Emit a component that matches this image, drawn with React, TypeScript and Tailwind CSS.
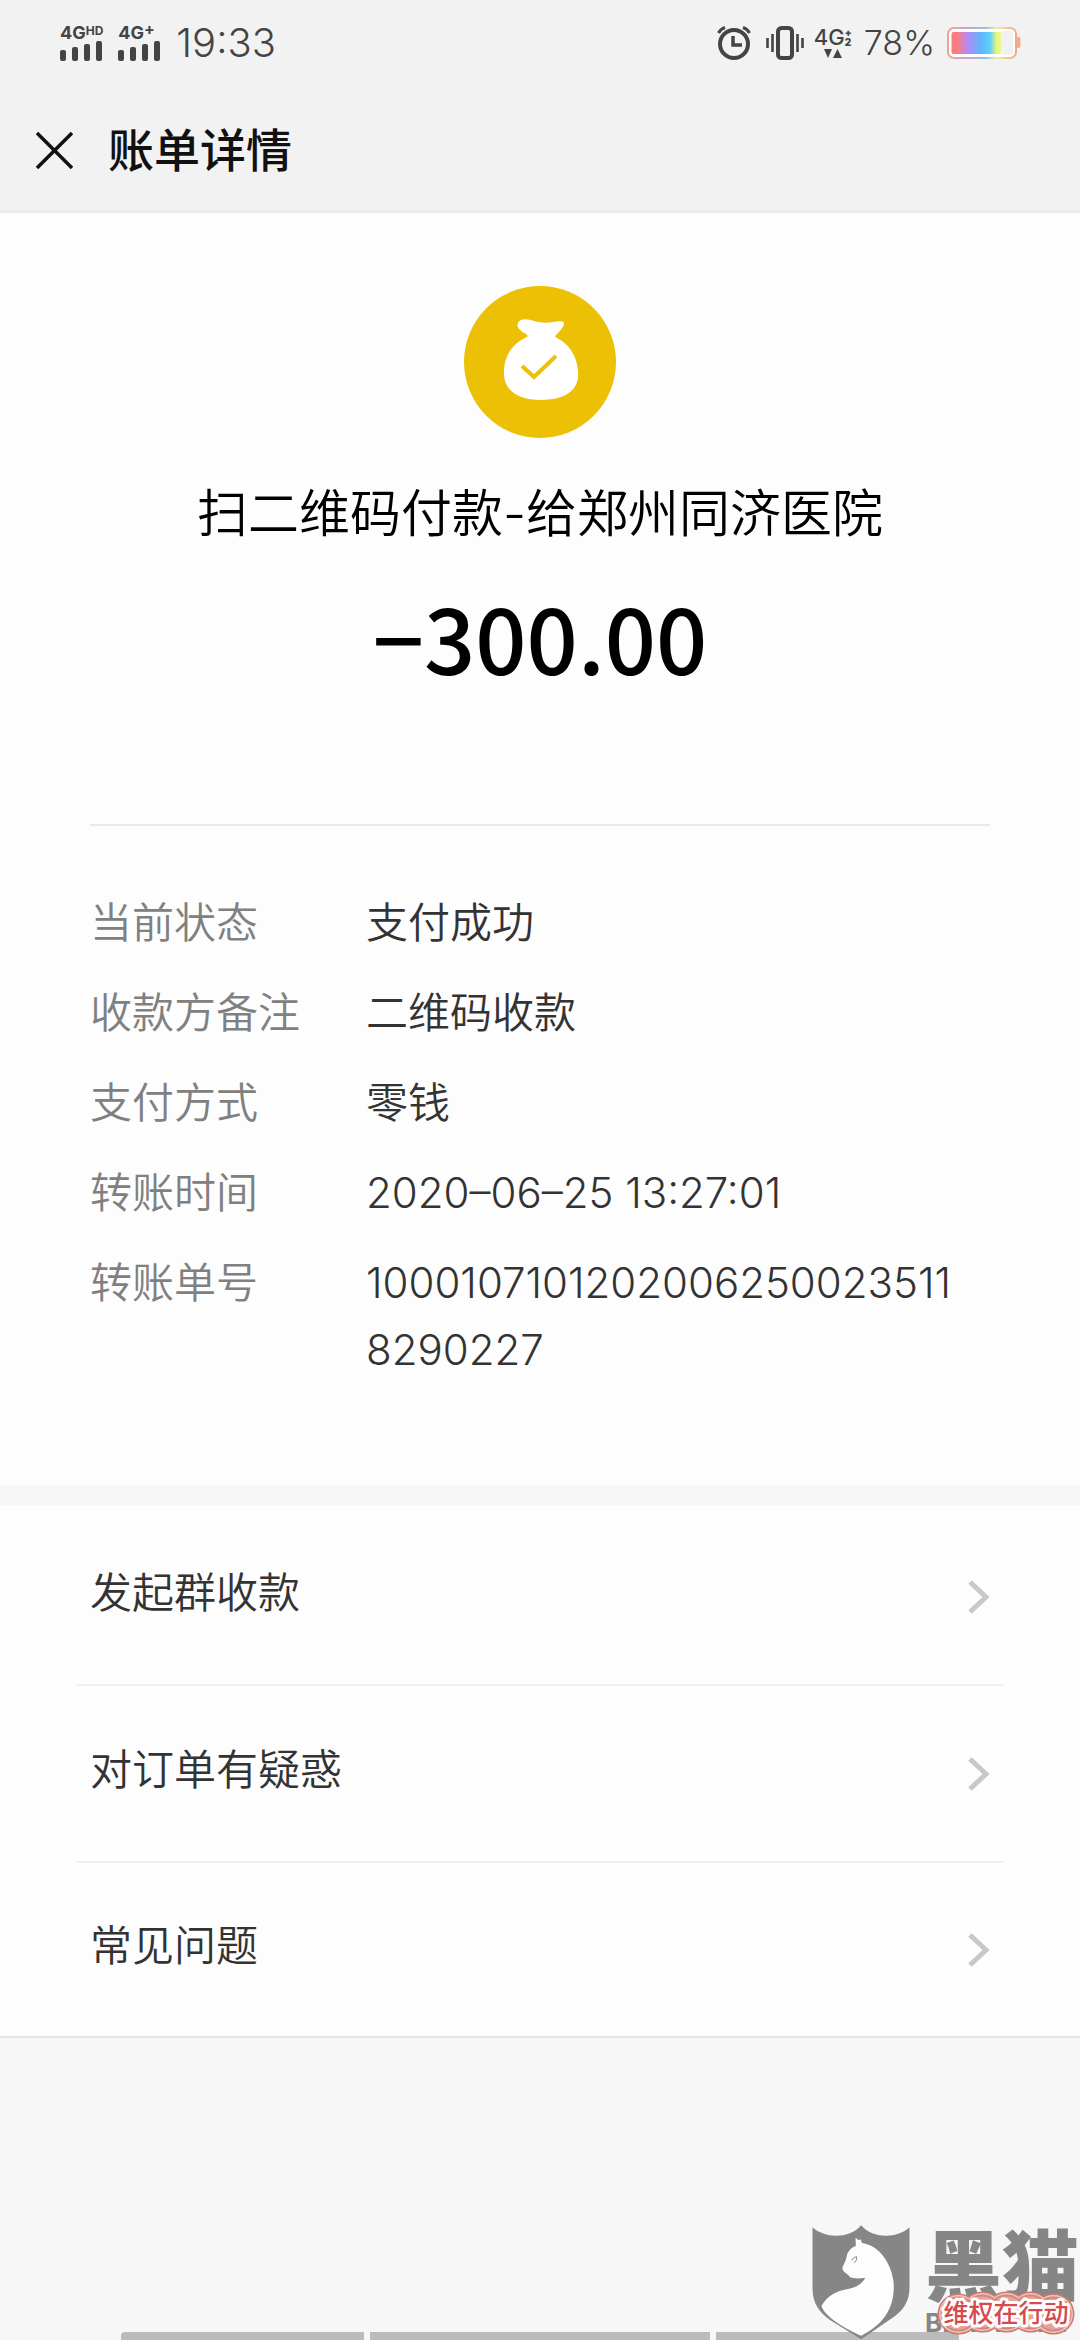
import type { ReactNode } from "react";

const details = [
  { label: "当前状态", value: "支付成功" },
  { label: "收款方备注", value: "二维码收款" },
  { label: "支付方式", value: "零钱" },
  { label: "转账时间", value: "2020–06–25 13:27:01" },
  { label: "转账单号", value: "10001071012020062500235118290227" },
];

const links = ["发起群收款", "对订单有疑惑", "常见问题"];

function Signal({ children }: { children: ReactNode }) {
  return (
    <div className="flex flex-col">
      <div className="flex h-4 items-start text-lg leading-4 font-bold">{children}</div>
      <svg viewBox="0 0 43 20" className="h-5 w-[43px]" fill="currentColor">
        <rect x="0" y="9" width="6" height="11" rx="2" />
        <rect x="12" y="6" width="6" height="14" rx="2" />
        <rect x="24" y="3" width="6" height="17" rx="2" />
        <rect x="36" y="0" width="6" height="20" rx="2" />
      </svg>
    </div>
  );
}

function AlarmIcon() {
  return (
    <svg viewBox="0 0 34 34" className="size-[34px]" fill="none" stroke="currentColor">
      <circle cx="17" cy="18" r="14" strokeWidth="4" />
      <path d="M16 10v9h9" strokeWidth="3.5" />
      <path d="M1.5 7C3 4 5 2.5 8 1.5M32.5 7C31 4 29 2.5 26 1.5" strokeWidth="3" />
    </svg>
  );
}

function VibrateIcon() {
  return (
    <svg viewBox="0 0 38 34" className="h-[34px] w-[38px]" fill="none" stroke="currentColor">
      <rect x="12" y="2" width="14" height="30" rx="3.5" strokeWidth="4" />
      <path d="M6.5 8v18M31.5 8v18" strokeWidth="2.6" />
      <path d="M1.5 12v10M36.5 12v10" strokeWidth="2.6" />
    </svg>
  );
}

function BatteryIcon() {
  return (
    <svg viewBox="0 0 74 32" className="h-8 w-[74px]">
      <defs>
        <linearGradient id="charge">
          <stop offset="0" stopColor="#ff7a7a" />
          <stop offset="0.12" stopColor="#fb7d80" />
          <stop offset="0.32" stopColor="#b58af8" />
          <stop offset="0.6" stopColor="#5cb8fb" />
          <stop offset="0.78" stopColor="#63d3f5" />
          <stop offset="0.9" stopColor="#e6f57c" />
          <stop offset="1" stopColor="#eef78c" />
        </linearGradient>
        <linearGradient id="shell">
          <stop offset="0" stopColor="#f0a392" />
          <stop offset="0.3" stopColor="#c9a3dc" />
          <stop offset="0.55" stopColor="#8ec4ee" />
          <stop offset="0.72" stopColor="#eef0a0" />
          <stop offset="1" stopColor="#f0ab84" />
        </linearGradient>
      </defs>
      <rect x="1" y="1" width="68" height="30" rx="6" fill="#fff" stroke="url(#shell)" strokeWidth="2" />
      <rect x="4.5" y="5" width="50" height="22" rx="2" fill="url(#charge)" />
      <rect x="54" y="4" width="12" height="24" rx="3" fill="#f1f1f1" />
      <path d="M70 10h1.5q2 0 2 2v7q0 2-2 2H70z" fill="#f0b087" />
    </svg>
  );
}

function StatusBar() {
  return (
    <div className="flex h-[86px] items-center justify-between pr-[59px] pl-[60px] text-[#444]">
      <div className="flex items-center gap-[15px]">
        <Signal>
          4G<span className="text-xs leading-3">HD</span>
        </Signal>
        <Signal>
          4G<span className="text-base leading-2">+</span>
        </Signal>
        <time className="text-[40px] leading-none font-light">19:33</time>
      </div>
      <div className="flex items-center">
        <AlarmIcon />
        <span className="ml-[15px]">
          <VibrateIcon />
        </span>
        <div className="mr-3 ml-2.5 flex w-[38px] flex-col">
          <div className="flex text-[22px] leading-5 font-medium">
            4G
            <span className="flex flex-col text-[10px] leading-[10px] font-black">
              <span>+</span>
              <span>2</span>
            </span>
          </div>
          <svg viewBox="0 0 38 12" className="h-3 w-[38px]" fill="currentColor">
            <path d="M10 2h8l-4 9zM19 11h9l-4.5-9z" />
          </svg>
        </div>
        <span className="mr-3 text-[34px] leading-none font-light">78%</span>
        <BatteryIcon />
      </div>
    </div>
  );
}

function MoneyBag() {
  return (
    <svg viewBox="0 0 152 152" className="mx-auto size-[152px]">
      <circle cx="76" cy="76" r="76" fill="#ebc005" />
      <path
        d="M54 37c2-5 10-4 16-2 7 2 13 2 19 1 6-1 11-1 11 1 0 4-4 8-8 12-1 1-1 2 1 3 12 6 20 18 21 33 2 20-14 29-37 29s-38-9-37-29c0-15 9-28 23-34 1-1 1-1-1-3-5-3-10-6-8-11z"
        fill="#fff"
      />
      <path d="M58 80l12 11 22-21" fill="none" stroke="#ebc005" strokeWidth="4" />
    </svg>
  );
}

/* shield logo, brand name and the red slogan sticker over it */
function Watermark() {
  return (
    <div className="absolute right-0 bottom-0 flex gap-[15px]">
      <svg viewBox="93 75 293 345" className="h-[115px] w-[98px]">
        <path
          d="M94 82C130 116 205 118 240 76C275 118 350 116 385 82V262C385 310 362 335 332 355L240 418L150 362C115 340 94 310 94 265Z"
          fill="#868686"
        />
        <path
          d="M223 113L233 121L239 118L242 129C290 135 330 185 337 245C342 300 325 365 240 407C195 388 130 350 121 318C140 285 165 274 200 267C225 262 243 252 252 233C235 236 218 236 207 232C202 223 188 219 184 208C182 200 194 186 196 172C198 156 208 144 224 138Z"
          fill="#fdfdfd"
        />
        <path d="M212 182c2-8 8-10 14-12c2 8-2 16-8 18" fill="none" stroke="#868686" strokeWidth="3" />
      </svg>
      <div className="w-[155px] text-[#868686]">
        <div className="pt-1.5 text-[77px] leading-[72px] font-black whitespace-nowrap">黑猫</div>
        <div className="pt-1 text-[26px] leading-8 font-bold whitespace-nowrap">BLACK CAT</div>
      </div>
      <svg viewBox="0 0 140 46" className="absolute right-1 bottom-1 h-[46px] w-[140px]">
        <g fill="none" strokeLinecap="round">
          <path d="M22 24h1M46 22h1M70 22h1M94 22h1M117 24h1" stroke="#cb7a72" strokeWidth="41" />
          <path d="M22 24h1M46 22h1M70 22h1M94 22h1M117 24h1" stroke="#efc3ba" strokeWidth="38" />
          <path d="M22 24h1M46 22h1M70 22h1M94 22h1M117 24h1" stroke="#d58880" strokeWidth="35" />
          <path d="M22 24h1M46 22h1M70 22h1M94 22h1M117 24h1" stroke="#e3a49b" strokeWidth="31" />
        </g>
        <text
          x="70"
          y="32"
          textAnchor="middle"
          fontSize="25"
          fontWeight="500"
          fill="#d8494c"
          stroke="#fff"
          strokeWidth="6"
          strokeLinejoin="round"
          paintOrder="stroke"
        >
          维权在行动
        </text>
      </svg>
    </div>
  );
}

export default function App() {
  return (
    <div className="relative flex min-h-screen flex-col bg-[#f7f7f7] font-[Inter,'Noto_Sans_CJK_SC',sans-serif] text-[#333]">
      <header className="border-b-[3px] border-[#ebebeb] bg-[#f2f2f2]">
        <StatusBar />
        <div className="flex h-[124px] items-center pt-1 pl-9 text-[#111]">
          <button type="button" aria-label="关闭" className="mr-[35px]">
            <svg viewBox="0 0 37 37" className="size-[37px]" fill="none" stroke="currentColor" strokeWidth="3.5">
              <path d="M1 1l35 35M36 1L1 36" />
            </svg>
          </button>
          <h1 className="text-[46px] leading-none font-medium">账单详情</h1>
        </div>
      </header>

      <main>
        <section className="bg-[#fdfdfd] px-[90px] pt-[73px] pb-[102px]">
          <MoneyBag />
          <p className="mt-10 text-center text-[51px] leading-[72px] font-[350] whitespace-nowrap text-black">
            扫二维码付款-给郑州同济医院
          </p>
          <p className="mt-[38px] text-center font-['Noto_Sans_CJK_SC',sans-serif] text-[90px] leading-24 font-medium text-black">
            −300.00
          </p>
          <hr className="mt-[140px] border-t-2 border-[#e9e9e9]" />

          <dl className="mt-[63px] flex flex-col gap-[23px] text-[42px] leading-[67px] font-[350]">
            {details.map((row) => (
              <div key={row.label} className="flex">
                <dt className="w-[276px] shrink-0 text-[#808080]">{row.label}</dt>
                <dd className="min-w-0 flex-1 pr-6 break-all">{row.value}</dd>
              </div>
            ))}
          </dl>
        </section>

        <nav className="mt-5 border-b-2 border-[#e5e5e5] bg-[#fdfdfd] px-[76px] pt-1 font-[350]">
          {links.map((text) => (
            <a
              key={text}
              href="#"
              className="flex h-[177px] items-center justify-between border-b-2 border-[#efefef] px-[14px] text-[42px] last:h-[173px] last:border-b-0"
            >
              <span className="pb-2">{text}</span>
              <svg viewBox="0 0 22 34" className="h-[34px] w-[22px]" fill="none" stroke="#c8c8c8" strokeWidth="5">
                <path d="M2 2l16 15L2 32" />
              </svg>
            </a>
          ))}
        </nav>
      </main>

      <div className="mt-auto flex h-2 gap-1.5 px-[121px]">
        <div className="flex-5 rounded-tl bg-[#bbb]" />
        <div className="flex-7 bg-[#bbb]" />
        <div className="flex-5 rounded-tr bg-[#bbb]" />
      </div>

      <Watermark />
    </div>
  );
}
